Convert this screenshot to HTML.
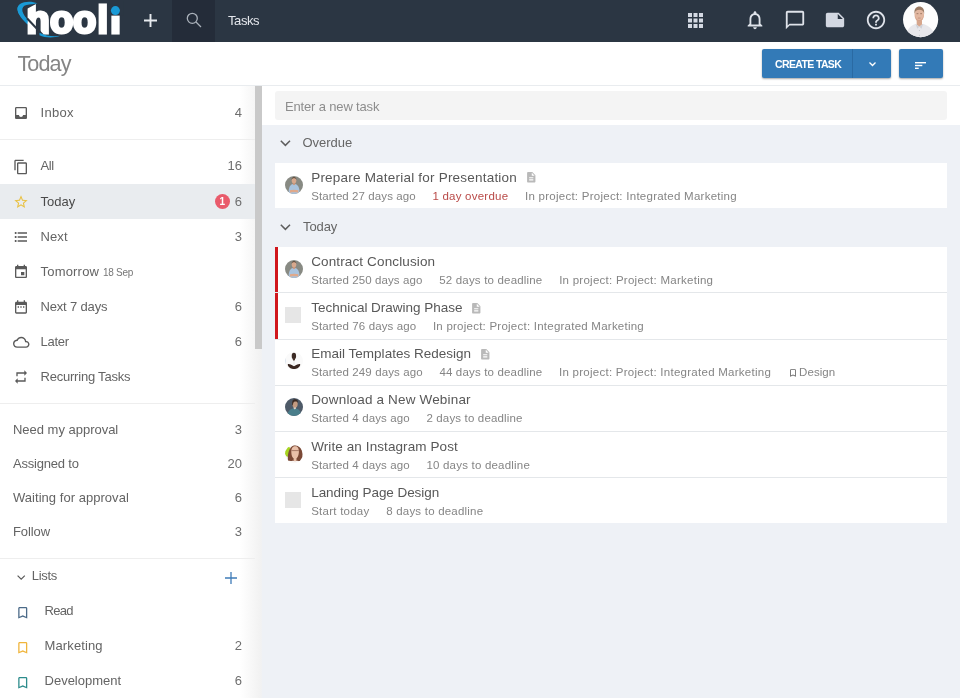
<!DOCTYPE html>
<html lang="en">
<head>
<meta charset="utf-8">
<title>Hooli Tasks - Today</title>
<style>
*{box-sizing:border-box;margin:0;padding:0}
html,body{width:960px;height:698px;overflow:hidden;background:#fff}
body{font-family:"Liberation Sans",sans-serif;color:#555;position:relative;font-size:13px;will-change:transform;opacity:.999}
.abs{position:absolute}
.t{position:absolute;white-space:nowrap;line-height:20px;height:20px}
svg{display:block;position:absolute;overflow:visible}
/* header */
#hdr{position:absolute;left:0;top:0;width:960px;height:42px;background:#2b3643}
#srch{position:absolute;left:172px;top:0;width:43px;height:42px;background:#242c39}
/* title bar */
#tbar{position:absolute;left:0;top:42px;width:960px;height:44px;background:#fff;border-bottom:1px solid #e9ecef}
.btn{position:absolute;top:49px;height:29px;background:#337ab7;border-radius:2px;box-shadow:0 1px 2px rgba(0,0,0,.35)}
/* sidebar */
#side{position:absolute;left:0;top:86px;width:262px;height:612px;background:linear-gradient(90deg,#fff 0,#fff 240px,#f2f2f2 260px,#f0f1f3 262px)}
#sbar{display:none}
#thumb{position:absolute;left:255px;top:86px;width:7px;height:263px;background:#c9c9c9}
.hr{position:absolute;left:0;width:255px;height:1px;background:#eeeeee}
.nav{color:#646464;font-size:13px}
.cnt{position:absolute;white-space:nowrap;line-height:20px;height:20px;right:718px;text-align:right;font-size:13px;color:#6e6e6e}
/* main */
#main{position:absolute;left:262px;top:86px;width:698px;height:612px;background:#eef1f6}
#newbar{position:absolute;left:262px;top:86px;width:698px;height:39px;background:#fff}
#newinp{position:absolute;left:275px;top:91px;width:671.8px;height:29px;background:#f4f4f4;border-radius:3px}
.card{position:absolute;left:275px;width:671.8px;background:#fff}
.row{position:absolute;left:275px;width:671.8px;height:46.25px;background:#fff;border-bottom:1px solid #e4e7ea}
.ttl{position:absolute;left:36.200px;top:4.5px;line-height:20px;height:20px;font-size:13.5px;color:#585858;white-space:nowrap}
.sub{position:absolute;left:36.200px;top:22.600px;line-height:20px;height:20px;font-size:11.5px;color:#858585;white-space:nowrap}
.sub span{display:inline-block;margin-right:16.7px}
.red{color:#b94a48}
.chk{position:absolute;left:10.300px;top:13.900px;width:16px;height:16px;background:#e6e6e6}
.av{position:absolute;left:10px;top:12.500px;width:18px;height:18px;border-radius:50%;overflow:hidden}
.bar{position:absolute;left:0;top:0;width:3px;height:100%;background:#d0161c}
.sec{color:#666;font-size:13px}
.ttl svg.doc{position:relative;display:inline-block;vertical-align:-2.300px;margin-left:7.600px}
.sub svg.tg{position:relative;display:inline-block;vertical-align:-1.500px;margin-left:-.1px;margin-right:1.400px}
#u3_t{margin-right:0}#n4{letter-spacing:.2px}
.av svg{position:absolute}
/*TUNE*/
#n0{letter-spacing:0.299px}
#n1{letter-spacing:-0.446px}
#n2{letter-spacing:0.016px}
#n3{letter-spacing:0.089px}
#n5{letter-spacing:-0.167px}
#n6{letter-spacing:-0.256px}
#n7{letter-spacing:-0.212px}
#g0{letter-spacing:-0.016px}
#g1{letter-spacing:-0.207px}
#g2{letter-spacing:0.036px}
#g3{letter-spacing:-0.088px}
#lists{letter-spacing:-0.298px}
#l0{letter-spacing:-0.703px}
#l1{letter-spacing:0.127px}
#l2{letter-spacing:0.005px}
#ph{letter-spacing:-0.161px}
#s0{letter-spacing:-0.025px}
#s1{letter-spacing:-0.081px}
#tasks{letter-spacing:-0.424px}
#ptitle{letter-spacing:-0.923px}
#ctask{letter-spacing:-0.631px}
#t0{letter-spacing:0.211px}
#t1{letter-spacing:0.129px}
#t2{letter-spacing:-0.010px}
#t3{letter-spacing:0.015px}
#t4{letter-spacing:0.169px}
#t5{letter-spacing:0.092px}
#t6{letter-spacing:-0.061px}
#u0_0{letter-spacing:0.083px}
#u0_1{letter-spacing:0.233px}
#u0_2{letter-spacing:0.257px}
#u1_0{letter-spacing:0.099px}
#u1_1{letter-spacing:0.184px}
#u1_2{letter-spacing:0.259px}
#u2_0{letter-spacing:0.111px}
#u2_1{letter-spacing:0.237px}
#u3_0{letter-spacing:0.109px}
#u3_1{letter-spacing:0.165px}
#u3_2{letter-spacing:0.263px}
#u4_0{letter-spacing:0.109px}
#u4_1{letter-spacing:0.159px}
#u5_0{letter-spacing:0.109px}
#u5_1{letter-spacing:0.207px}
#u6_0{letter-spacing:0.243px}
#u6_1{letter-spacing:0.211px}
#u3_t{letter-spacing:0.048px}
#sep18{letter-spacing:-0.272px}
/*ENDTUNE*/
</style>
</head>
<body>
<div id="hdr">
  <div id="srch"></div>
  <!-- logo -->
  <svg id="logo" style="left:0;top:0" width="135" height="42" viewBox="0 0 135 42">
    <path d="M17.5 9.500C17 5 22 1.800 30 3.800C25 4.500 21.500 6.500 22.500 11.500C23.500 15 26 18 29 21L29 25.500C22 20 18 14 17.500 9.500Z" fill="#1a9ad6"/>
    <text id="logot" x="26.500 50 73 97.600 110.200" y="33.300" font-family="Liberation Sans, sans-serif" font-weight="bold" font-size="38" fill="#fff" stroke="#fff" stroke-width="3" stroke-linejoin="miter" >hooli</text>
    <path d="M24 0H37.500V3.200L28 8.200L24 10Z" fill="#2b3643"/>
    <path d="M37.500 3.300C32 1 24.500 1 20 4C16.300 6.800 17 11.800 20.300 15.800C22.500 18.500 25 20.800 27.500 22.600L27.500 19.600C25.300 17.600 23 15 21.800 12C20.600 8.800 22.500 6.200 26.500 5.100C30 4.300 34 4.200 37.500 3.300Z" fill="#1a9ad6"/>
    <rect x="109.500" y="1" width="14" height="14.600" fill="#2b3643"/>
    <circle cx="115.400" cy="10.600" r="4.500" fill="#1a9ad6"/>
    <path d="M27 18.200L42.500 34.800" stroke="#2b3643" stroke-width="2" fill="none"/>
    <path d="M39.500 32.800C46 36.200 54 36.800 60.500 35.800C54 38 45 38 39.500 35.200Z" fill="#1a9ad6"/>
  </svg>
  <!-- plus -->
  <svg style="left:144px;top:13.500px" width="13" height="13" viewBox="0 0 13 13"><path d="M6.500 0V13M0 6.500H13" stroke="#e8ebef" stroke-width="1.900" fill="none"/></svg>
  <!-- search -->
  <svg style="left:185px;top:11px" width="18" height="18" viewBox="0 0 18 18"><circle cx="7.300" cy="7.300" r="5" stroke="#aab1ba" stroke-width="1.300" fill="none"/><path d="M11 11L16 16" stroke="#aab1ba" stroke-width="1.300" fill="none"/></svg>
  <div class="t" id="tasks" style="left:228px;top:10.600px;font-size:13px;color:#e4e7ec">Tasks</div>
  <!-- apps -->
  <svg style="left:688px;top:13px" width="15" height="15" viewBox="0 0 15 15" fill="#d4d9e3"><rect x="0" y="0" width="4" height="4"/><rect x="5.500" y="0" width="4" height="4"/><rect x="11" y="0" width="4" height="4"/><rect x="0" y="5.500" width="4" height="4"/><rect x="5.500" y="5.500" width="4" height="4"/><rect x="11" y="5.500" width="4" height="4"/><rect x="0" y="11" width="4" height="4"/><rect x="5.500" y="11" width="4" height="4"/><rect x="11" y="11" width="4" height="4"/></svg>
  <!-- bell -->
  <svg style="left:744px;top:9px" width="22" height="22" viewBox="0 0 24 24" fill="#dfe3ea"><path d="M12 22c1.100 0 2-.9 2-2h-4c0 1.100.9 2 2 2zm6-6v-5c0-3.070-1.630-5.640-4.500-6.320V4c0-.83-.67-1.500-1.500-1.500s-1.500.67-1.500 1.500v.68C7.640 5.360 6 7.920 6 11v5l-2 2v1h16v-1l-2-2zm-2 1H8v-6c0-2.480 1.510-4.500 4-4.500s4 2.020 4 4.500v6z"/></svg>
  <!-- chat -->
  <svg style="left:784px;top:9px" width="22" height="22" viewBox="0 0 24 24" fill="#dfe3ea"><path d="M20 2H4c-1.100 0-2 .9-2 2v18l4-4h14c1.100 0 2-.9 2-2V4c0-1.100-.9-2-2-2zm0 14H6l-2 2V4h16v12z"/></svg>
  <!-- note -->
  <svg style="left:824px;top:9px" width="22" height="22" viewBox="0 0 24 24" fill="#d3d8e2"><path d="M22 10l-6-6H4c-1.100 0-2 .9-2 2v12.010c0 1.100.9 1.990 2 1.990l16-.01c1.100 0 2-.89 2-1.990v-8zm-7-4.500l5.500 5.500H15V5.500z"/></svg>
  <!-- help -->
  <svg style="left:864.500px;top:9px" width="22" height="22" viewBox="0 0 24 24" fill="#dfe3ea"><path d="M11 18h2v-2h-2v2zm1-16C6.480 2 2 6.480 2 12s4.480 10 10 10 10-4.480 10-10S17.520 2 12 2zm0 18c-4.410 0-8-3.590-8-8s3.590-8 8-8 8 3.590 8 8-3.590 8-8 8zm0-14c-2.210 0-4 1.790-4 4h2c0-1.100.9-2 2-2s2 .9 2 2c0 2-3 1.750-3 5h2c0-2.250 3-2.500 3-5 0-2.210-1.790-4-4-4z"/></svg>
  <!-- avatar -->
  <svg style="left:903px;top:2.300px" width="35.200" height="35.200" viewBox="0 0 35 35">
    <defs><clipPath id="cpu"><circle cx="17.500" cy="17.500" r="17.500"/></clipPath></defs>
    <circle cx="17.500" cy="17.500" r="17.500" fill="#fdfdfd"/>
    <g clip-path="url(#cpu)">
      <path d="M3 36C3 28 7 23.800 12.500 21.700L16.200 24.200L20 21.700C26 23.800 31.500 28 32 36Z" fill="#e7e7eb"/>
      <path d="M13.600 16H18.900V22.300L16.200 24.600L13.600 22.300Z" fill="#d6a68c"/>
      <path d="M12.500 21.700L16.200 24.600L14.200 26.600Z M20 21.700L16.200 24.600L18.400 26.600Z" fill="#cfd0d6"/>
      <ellipse cx="16.200" cy="12.700" rx="4.800" ry="6.500" fill="#e2b7a0"/>
      <path d="M11.400 12C10.800 6.500 13.500 4.500 16.200 4.500C19 4.500 21.600 6.500 21 12C20.500 8.800 19 7.600 16.200 7.600C13.500 7.600 12 8.800 11.400 12Z" fill="#9a7a63"/>
      <path d="M13.500 11.600H15.300M17.100 11.600H18.900" stroke="#8a6450" stroke-width=".7"/><path d="M14.800 16H17.600" stroke="#b98572" stroke-width=".7"/><path d="M12 13C12 17 14 19.300 16.200 19.300C18.400 19.300 20.400 17 20.400 13C20 16 18.500 18 16.200 18C13.900 18 12.400 16 12 13Z" fill="#d3a28a"/><circle cx="16.300" cy="28.300" r=".5" fill="#b9bac2"/><circle cx="16.300" cy="33" r=".5" fill="#b9bac2"/>
    </g>
  </svg>
</div>
<div id="tbar"></div>
<div class="t" id="ptitle" style="left:17.500px;top:48.700px;line-height:30px;height:30px;font-size:21.600px;color:#858585">Today</div>
<div class="btn" style="left:762px;width:128.500px"></div>
<div class="abs" style="left:852px;top:49px;width:1px;height:29px;background:#2a6aa3"></div>
<div class="t" id="ctask" style="left:775px;top:53.500px;font-size:10.500px;font-weight:bold;color:#fff">CREATE TASK</div>
<svg style="left:868.800px;top:62px" width="7" height="4.500" viewBox="0 0 7 4.500"><path d="M0.500 0.500L3.500 3.500L6.500 0.500" stroke="#fff" stroke-width="1.300" fill="none"/></svg>
<div class="btn" style="left:899px;width:43.500px"></div>
<svg style="left:915px;top:62px" width="11" height="7" viewBox="0 0 11 7" fill="#fff"><rect x="0" y="0" width="11" height="1.400"/><rect x="0" y="2.800" width="7.300" height="1.400"/><rect x="0" y="5.600" width="3.700" height="1.400"/></svg>
<!-- sidebar -->
<div id="side"></div>
<div id="sbar"></div>
<div id="thumb"></div>
<div class="abs" style="left:0;top:184px;width:255px;height:35px;background:#e9ecef"></div>
<div class="hr" style="top:139px"></div>
<div class="hr" style="top:403px"></div>
<div class="hr" style="top:558px"></div>
<svg style="left:12.8px;top:105px" width="16" height="16" viewBox="0 0 24 24" fill="#5a5a5a"><path d="M19 3H4.990c-1.110 0-1.980.89-1.980 2L3 19c0 1.100.88 2 1.990 2H19c1.100 0 2-.9 2-2V5c0-1.110-.9-2-2-2zm0 12h-4c0 1.660-1.350 3-3 3s-3-1.340-3-3H4.990V5H19v10z"/></svg>
<div class="t nav" id="n0" style="left:40.500px;top:102.5px;color:#646464">Inbox</div>
<div class="cnt" style="top:102.5px">4</div>
<svg style="left:12.8px;top:158.5px" width="16" height="16" viewBox="0 0 24 24" fill="#5a5a5a"><path d="M16 1H4c-1.100 0-2 .9-2 2v14h2V3h12V1zm3 4H8c-1.100 0-2 .9-2 2v14c0 1.100.9 2 2 2h11c1.100 0 2-.9 2-2V7c0-1.100-.9-2-2-2zm0 16H8V7h11v14z"/></svg>
<div class="t nav" id="n1" style="left:40.500px;top:156px;color:#646464">All</div>
<div class="cnt" style="top:156px">16</div>
<svg style="left:12.8px;top:194px" width="16" height="16" viewBox="0 0 24 24" fill="#e9c143"><path d="M22 9.240l-7.190-.62L12 2 9.190 8.630 2 9.240l5.460 4.730L5.820 21 12 17.270 18.180 21l-1.630-7.030L22 9.240zM12 15.400l-3.760 2.270 1-4.280-3.320-2.880 4.380-.38L12 6.100l1.710 4.040 4.380.38-3.320 2.880 1 4.280L12 15.400z"/></svg>
<div class="t nav" id="n2" style="left:40.500px;top:191.5px;color:#4a4a4a">Today</div>
<div class="cnt" style="top:191.5px">6</div>
<svg style="left:12.8px;top:229px" width="16" height="16" viewBox="0 0 24 24" fill="#5a5a5a"><path d="M4 10.500c-.83 0-1.500.67-1.500 1.500s.67 1.500 1.500 1.500 1.500-.67 1.500-1.500-.67-1.500-1.500-1.500zm0-6c-.83 0-1.500.67-1.500 1.500S3.170 7.500 4 7.500 5.500 6.830 5.500 6 4.830 4.500 4 4.500zm0 12c-.83 0-1.500.68-1.500 1.500s.68 1.500 1.500 1.500 1.500-.68 1.500-1.500-.67-1.500-1.500-1.500zM7 19h14v-2H7v2zm0-6h14v-2H7v2zm0-8v2h14V5H7z"/></svg>
<div class="t nav" id="n3" style="left:40.500px;top:226.5px;color:#646464">Next</div>
<div class="cnt" style="top:226.5px">3</div>
<svg style="left:12.8px;top:264px" width="16" height="16" viewBox="0 0 24 24" fill="#5a5a5a"><path d="M17 12h-5v5h5v-5zM16 1v2H8V1H6v2H5c-1.110 0-1.990.9-1.990 2L3 19c0 1.100.89 2 2 2h14c1.100 0 2-.9 2-2V5c0-1.100-.9-2-2-2h-1V1h-2zm3 18H5V8h14v11z"/></svg>
<div class="t nav" id="n4" style="left:40.500px;top:261.5px;color:#646464">Tomorrow <span style="font-size:10px;color:#777" id="sep18">18 Sep</span></div>
<svg style="left:12.8px;top:299px" width="16" height="16" viewBox="0 0 24 24" fill="#5a5a5a"><path d="M9 11H7v2h2v-2zm4 0h-2v2h2v-2zm4 0h-2v2h2v-2zm2-7h-1V2h-2v2H8V2H6v2H5c-1.110 0-1.990.9-1.990 2L3 20c0 1.100.89 2 2 2h14c1.100 0 2-.9 2-2V6c0-1.100-.9-2-2-2zm0 16H5V9h14v11z"/></svg>
<div class="t nav" id="n5" style="left:40.500px;top:296.5px;color:#646464">Next 7 days</div>
<div class="cnt" style="top:296.5px">6</div>
<svg style="left:12.75px;top:333.75px" width="16.5" height="16.5" viewBox="0 0 24 24" fill="#5a5a5a"><path d="M19.350 10.040C18.670 6.590 15.640 4 12 4 9.110 4 6.600 5.640 5.350 8.040 2.340 8.360 0 10.910 0 14c0 3.310 2.690 6 6 6h13c2.760 0 5-2.240 5-5 0-2.640-2.050-4.780-4.650-4.960zM19 18H6c-2.210 0-4-1.790-4-4s1.790-4 4-4h.71C7.370 7.690 9.480 6 12 6c3.040 0 5.500 2.460 5.500 5.500v.5H19c1.660 0 3 1.340 3 3s-1.340 3-3 3z"/></svg>
<div class="t nav" id="n6" style="left:40.500px;top:331.5px;color:#646464">Later</div>
<div class="cnt" style="top:331.5px">6</div>
<svg style="left:12.8px;top:369px" width="16" height="16" viewBox="0 0 24 24" fill="#5a5a5a"><path d="M7 7h10v3l4-4-4-4v3H5v6h2V7zm10 10H7v-3l-4 4 4 4v-3h12v-6h-2v4z"/></svg>
<div class="t nav" id="n7" style="left:40.500px;top:366.5px;color:#646464">Recurring Tasks</div>
<div class="abs" style="left:214.500px;top:193.800px;width:15.500px;height:15.500px;border-radius:50%;background:#e95b6b"></div>
<div class="t" style="left:214.500px;width:15.500px;text-align:center;top:191.500px;font-size:10px;font-weight:bold;color:#fff">1</div>
<div class="t nav" id="g0" style="left:13px;top:420px">Need my approval</div>
<div class="cnt" style="top:420px">3</div>
<div class="t nav" id="g1" style="left:13px;top:454px">Assigned to</div>
<div class="cnt" style="top:454px">20</div>
<div class="t nav" id="g2" style="left:13px;top:488px">Waiting for approval</div>
<div class="cnt" style="top:488px">6</div>
<div class="t nav" id="g3" style="left:13px;top:522px">Follow</div>
<div class="cnt" style="top:522px">3</div>
<svg style="left:17.200px;top:574.500px" width="8.400" height="5" viewBox="0 0 8.400 5"><path d="M0.600 0.600L4.200 4.200L7.800 0.600" stroke="#5a5a5a" stroke-width="1.200" fill="none"/></svg>
<div class="t nav" id="lists" style="left:31.800px;top:566px">Lists</div>
<svg style="left:225.300px;top:571.500px" width="12" height="12" viewBox="0 0 12 12"><path d="M6 0V12M0 6H12" stroke="#3f7cb8" stroke-width="1.300" fill="none"/></svg>
<svg style="left:15.25px;top:605.25px" width="15.5" height="15.5" viewBox="0 0 24 24" fill="#4b6a88"><path d="M17 3H7c-1.100 0-1.990.9-1.990 2L5 21l7-3 7 3V5c0-1.100-.9-2-2-2zm0 15l-5-2.180L7 18V5h10v13z"/></svg>
<div class="t nav" id="l0" style="left:44.500px;top:601px">Read</div>
<svg style="left:15.25px;top:640.25px" width="15.5" height="15.5" viewBox="0 0 24 24" fill="#f0b53c"><path d="M17 3H7c-1.100 0-1.990.9-1.990 2L5 21l7-3 7 3V5c0-1.100-.9-2-2-2zm0 15l-5-2.180L7 18V5h10v13z"/></svg>
<div class="t nav" id="l1" style="left:44.500px;top:636px">Marketing</div>
<div class="cnt" style="top:636px">2</div>
<svg style="left:15.25px;top:675.25px" width="15.5" height="15.5" viewBox="0 0 24 24" fill="#2c8c8c"><path d="M17 3H7c-1.100 0-1.990.9-1.990 2L5 21l7-3 7 3V5c0-1.100-.9-2-2-2zm0 15l-5-2.180L7 18V5h10v13z"/></svg>
<div class="t nav" id="l2" style="left:44.500px;top:671px">Development</div>
<div class="cnt" style="top:671px">6</div>
<div id="main"></div>
<div id="newbar"></div>
<div id="newinp"></div>
<div class="t" id="ph" style="left:285px;top:96.900px;font-size:13px;color:#8d8d8d">Enter a new task</div>
<svg style="left:280.2px;top:140.3px" width="10.800" height="6.600" viewBox="0 0 10.800 6.600"><path d="M0.800 0.800L5.400 5.400L10 0.800" stroke="#5e5e5e" stroke-width="1.500" fill="none"/></svg>
<div class="t sec" id="s0" style="left:302.500px;top:133px">Overdue</div>
<svg style="left:280.2px;top:224.3px" width="10.800" height="6.600" viewBox="0 0 10.800 6.600"><path d="M0.800 0.800L5.400 5.400L10 0.800" stroke="#5e5e5e" stroke-width="1.500" fill="none"/></svg>
<div class="t sec" id="s1" style="left:303px;top:217px">Today</div>
<div class="row" style="top:163px;height:45px;border-bottom:0">
  <div class="av"><svg class="avs" width="18" height="18" viewBox="0 0 18 18" style="left:0;top:0"><rect width="18" height="18" fill="#888a83"/><path d="M3.600 18C3.400 11.500 5 8.200 9 7.800C13 8.200 14.800 11.500 14.600 18Z" fill="#a9c3de"/><path d="M4.800 14.300C7 13.600 11 13.600 13.400 14.300L13.200 16.800C10.500 16.200 7.500 16.200 5 16.800Z" fill="#dfa98b"/><path d="M7.700 6.500H10.300V8.200L9 9.200L7.700 8.200Z" fill="#c99378"/><ellipse cx="9" cy="4.400" rx="2.300" ry="2.900" fill="#d7a88d"/><path d="M6.700 4C6.500 1.600 7.700 .9 9 .9C10.300 .9 11.500 1.600 11.300 4C11 2.700 10.200 2.300 9 2.300C7.800 2.300 7 2.700 6.700 4Z" fill="#5d4a3c"/></svg></div>
  <div class="ttl"><span id="t0">Prepare Material for Presentation</span><svg class="doc" width="12.500" height="12.500" viewBox="0 0 24 24" fill="#b9b9b9"><path d="M14 2H6c-1.100 0-1.990.9-1.990 2L4 20c0 1.100.89 2 1.990 2H18c1.100 0 2-.9 2-2V8l-6-6zm2 16H8v-2h8v2zm0-4H8v-2h8v2zm-3-5V3.500L18.500 9H13z"/></svg></div>
  <div class="sub"><span id="u0_0">Started 27 days ago</span><span id="u0_1" class="red">1 day overdue</span><span id="u0_2">In project: Project: Integrated Marketing</span></div>
</div>
<div class="row" style="top:247px">
  <div class="bar"></div>
  <div class="av"><svg class="avs" width="18" height="18" viewBox="0 0 18 18" style="left:0;top:0"><rect width="18" height="18" fill="#888a83"/><path d="M3.600 18C3.400 11.500 5 8.200 9 7.800C13 8.200 14.800 11.500 14.600 18Z" fill="#a9c3de"/><path d="M4.800 14.300C7 13.600 11 13.600 13.400 14.300L13.200 16.800C10.500 16.200 7.500 16.200 5 16.800Z" fill="#dfa98b"/><path d="M7.700 6.500H10.300V8.200L9 9.200L7.700 8.200Z" fill="#c99378"/><ellipse cx="9" cy="4.400" rx="2.300" ry="2.900" fill="#d7a88d"/><path d="M6.700 4C6.500 1.600 7.700 .9 9 .9C10.300 .9 11.500 1.600 11.300 4C11 2.700 10.200 2.300 9 2.300C7.800 2.300 7 2.700 6.700 4Z" fill="#5d4a3c"/></svg></div>
  <div class="ttl"><span id="t1">Contract Conclusion</span></div>
  <div class="sub"><span id="u1_0">Started 250 days ago</span><span id="u1_1">52 days to deadline</span><span id="u1_2">In project: Project: Marketing</span></div>
</div>
<div class="row" style="top:293.25px">
  <div class="bar"></div>
  <div class="chk"></div>
  <div class="ttl"><span id="t2">Technical Drawing Phase</span><svg class="doc" width="12.500" height="12.500" viewBox="0 0 24 24" fill="#b9b9b9"><path d="M14 2H6c-1.100 0-1.990.9-1.990 2L4 20c0 1.100.89 2 1.990 2H18c1.100 0 2-.9 2-2V8l-6-6zm2 16H8v-2h8v2zm0-4H8v-2h8v2zm-3-5V3.500L18.500 9H13z"/></svg></div>
  <div class="sub"><span id="u2_0">Started 76 days ago</span><span id="u2_1">In project: Project: Integrated Marketing</span></div>
</div>
<div class="row" style="top:339.5px">
  <div class="av"><svg class="avs" width="18" height="18" viewBox="0 0 18 18" style="left:0;top:0"><rect width="18" height="18" fill="#fafafa"/><path d="M0 6C1.500 7 1.500 12 0 13Z" fill="#dfe6ee"/><path d="M8.700 7H9.300V13H8.700Z" fill="#dcdcdc"/><path d="M2.800 12.200C4 11.600 5.500 12.300 9 14.200C12.500 12.300 14 11.600 15.200 12.200C15.400 13.500 14.500 15 12.500 16.200C11 17.200 7 17.200 5.500 16.200C3.500 15 2.600 13.500 2.800 12.200Z" fill="#3a2721"/><ellipse cx="8.900" cy="4" rx="2.200" ry="3.200" fill="#3c2a24"/><path d="M7.800 6.500H10V8L8.900 8.800L7.800 8Z" fill="#4a342c"/></svg></div>
  <div class="ttl"><span id="t3">Email Templates Redesign</span><svg class="doc" width="12.500" height="12.500" viewBox="0 0 24 24" fill="#b9b9b9"><path d="M14 2H6c-1.100 0-1.990.9-1.990 2L4 20c0 1.100.89 2 1.990 2H18c1.100 0 2-.9 2-2V8l-6-6zm2 16H8v-2h8v2zm0-4H8v-2h8v2zm-3-5V3.500L18.500 9H13z"/></svg></div>
  <div class="sub"><span id="u3_0">Started 249 days ago</span><span id="u3_1">44 days to deadline</span><span id="u3_2">In project: Project: Integrated Marketing</span><span id="u3_tag"><svg class="tg" width="10" height="10" viewBox="0 0 24 24" fill="#666"><path d="M17 3H7c-1.100 0-1.990.9-1.990 2L5 21l7-3 7 3V5c0-1.100-.9-2-2-2zm0 15l-5-2.180L7 18V5h10v13z"/></svg><span id="u3_t">Design</span></span></div>
</div>
<div class="row" style="top:385.75px">
  <div class="av"><svg class="avs" width="18" height="18" viewBox="0 0 18 18" style="left:0;top:0"><rect width="18" height="18" fill="#4e5a68"/><path d="M2.500 18C2.500 13 5 10.500 9.500 10.200C14 10.500 16 13 16 18Z" fill="#4a7e8b"/><path d="M8.600 9H11V10.500L9.800 11.600L8.600 10.500Z" fill="#d9cfc4"/><ellipse cx="10" cy="5.900" rx="2.700" ry="3.700" fill="#c39a80"/><path d="M7.300 7C6.600 3 8 1.300 10.200 1.300C12.300 1.300 13.200 2.800 12.800 5C12.200 3.800 11.400 3.500 10 3.600C8.800 3.800 8 4.800 7.900 7.500Z" fill="#3b2b23"/></svg></div>
  <div class="ttl"><span id="t4">Download a New Webinar</span></div>
  <div class="sub"><span id="u4_0">Started 4 days ago</span><span id="u4_1">2 days to deadline</span></div>
</div>
<div class="row" style="top:432px">
  <div class="av"><svg class="avs" width="18" height="18" viewBox="0 0 18 18" style="left:0;top:0"><rect width="18" height="18" fill="#faf8f6"/><ellipse cx="2.800" cy="6.500" rx="3" ry="5.200" fill="#a7d521"/><path d="M3 15.500C2 9 4.500 .3 10.500 .3C16.500 .3 18.500 8 17.200 15.500C15 16.500 5 16.500 3 15.500Z" fill="#7b4936"/><path d="M6.300 7C6.300 2.800 8 1.200 10.200 1.200C12.600 1.200 14 3 13.900 7C13.800 10.500 12.500 12.500 11.500 13.200L11.500 16H8.600L8.600 13.200C7.400 12.500 6.300 10.500 6.300 7Z" fill="#e9c0a9"/><path d="M6.500 5.600H13.800" stroke="#8a5a4a" stroke-width=".7"/><path d="M5 18C5.500 15.800 7.500 15.200 10 16.400C12.500 15.200 14.500 15.800 15 18Z" fill="#fbf7f4"/></svg></div>
  <div class="ttl"><span id="t5">Write an Instagram Post</span></div>
  <div class="sub"><span id="u5_0">Started 4 days ago</span><span id="u5_1">10 days to deadline</span></div>
</div>
<div class="row" style="top:478.25px;height:45px;border-bottom:0">
  <div class="chk"></div>
  <div class="ttl"><span id="t6">Landing Page Design</span></div>
  <div class="sub"><span id="u6_0">Start today</span><span id="u6_1">8 days to deadline</span></div>
</div>
</body>
</html>
